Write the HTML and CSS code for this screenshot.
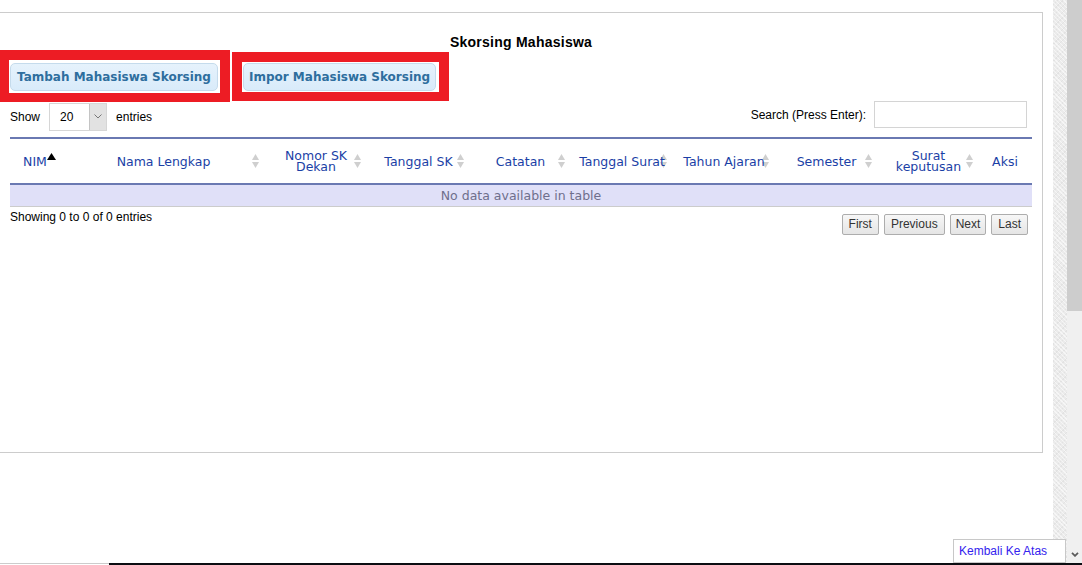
FILE: index.html
```html
<!DOCTYPE html>
<html lang="id">
<head>
<meta charset="utf-8">
<title>Skorsing Mahasiswa</title>
<link rel="stylesheet" href="styles.css">
</head>
<body>
<div class="screen">
  <div class="top">
    <main class="main">
      <section class="panel">
        <h1 class="title">Skorsing Mahasiswa</h1>
        <div class="btn-row">
          <div class="frame frame-1"><button class="ui-btn">Tambah Mahasiswa Skorsing</button></div>
          <div class="frame frame-2"><button class="ui-btn">Impor Mahasiswa Skorsing</button></div>
        </div>
        <div class="controls">
          <div class="length">
            <span>Show</span>
            <span class="select"><span class="select-val">20</span><span class="select-arrow"><svg width="8" height="5" viewBox="0 0 8 5"><polyline points="0.5,0.5 4,4 7.5,0.5" fill="none" stroke="#777" stroke-width="1"/></svg></span></span>
            <span>entries</span>
          </div>
          <div class="search">
            <span>Search (Press Enter):</span>
            <span class="search-input"></span>
          </div>
        </div>
        <table class="data">
          <colgroup>
            <col class="c-nim"><col class="c-nama"><col class="c-nomor"><col class="c-tglsk"><col class="c-catatan"><col class="c-tglsurat"><col class="c-tahun"><col class="c-semester"><col class="c-surat"><col class="c-aksi">
          </colgroup>
          <thead>
            <tr class="head-row">
              <th class="th-nim"><span class="sort-asc"><svg width="9" height="7" viewBox="0 0 9 7"><polygon points="0,7 4.5,0 9,7" fill="#000"/></svg></span><span class="lbl">NIM</span></th>
              <th><span class="sort"><svg width="7" height="14" viewBox="0 0 7 14"><polygon points="0,6 3.5,0 7,6" /><polygon points="0,8 7,8 3.5,14"/></svg></span><span class="lbl">Nama Lengkap</span></th>
              <th><span class="sort"><svg width="7" height="14" viewBox="0 0 7 14"><polygon points="0,6 3.5,0 7,6" /><polygon points="0,8 7,8 3.5,14"/></svg></span><span class="lbl">Nomor SK Dekan</span></th>
              <th><span class="sort"><svg width="7" height="14" viewBox="0 0 7 14"><polygon points="0,6 3.5,0 7,6" /><polygon points="0,8 7,8 3.5,14"/></svg></span><span class="lbl">Tanggal SK</span></th>
              <th><span class="sort"><svg width="7" height="14" viewBox="0 0 7 14"><polygon points="0,6 3.5,0 7,6" /><polygon points="0,8 7,8 3.5,14"/></svg></span><span class="lbl">Catatan</span></th>
              <th><span class="sort"><svg width="7" height="14" viewBox="0 0 7 14"><polygon points="0,6 3.5,0 7,6" /><polygon points="0,8 7,8 3.5,14"/></svg></span><span class="lbl">Tanggal Surat</span></th>
              <th><span class="sort"><svg width="7" height="14" viewBox="0 0 7 14"><polygon points="0,6 3.5,0 7,6" /><polygon points="0,8 7,8 3.5,14"/></svg></span><span class="lbl">Tahun Ajaran</span></th>
              <th><span class="sort"><svg width="7" height="14" viewBox="0 0 7 14"><polygon points="0,6 3.5,0 7,6" /><polygon points="0,8 7,8 3.5,14"/></svg></span><span class="lbl">Semester</span></th>
              <th><span class="sort"><svg width="7" height="14" viewBox="0 0 7 14"><polygon points="0,6 3.5,0 7,6" /><polygon points="0,8 7,8 3.5,14"/></svg></span><span class="lbl">Surat keputusan</span></th>
              <th class="th-aksi"><span class="lbl">Aksi</span></th>
            </tr>
          </thead>
          <tbody>
            <tr><td class="empty" colspan="10">No data available in table</td></tr>
          </tbody>
        </table>
        <div class="table-foot">
          <div class="info">Showing 0 to 0 of 0 entries</div>
          <div class="paginate">
            <span class="pg-btn">First</span>
            <span class="pg-btn">Previous</span>
            <span class="pg-btn pg-next">Next</span>
            <span class="pg-btn">Last</span>
          </div>
        </div>
      </section>
    </main>
    <div class="texture"></div>
    <div class="scrollbar">
      <div class="thumb"></div>
      <div class="track"><svg width="8" height="5" viewBox="0 0 8 5"><polyline points="1,0.8 4,3.8 7,0.8" fill="none" stroke="#5a5a5a" stroke-width="1.8"/></svg></div>
    </div>
  </div>
  <div class="bottom"><div class="bottom-left"></div><div class="bottom-right"></div></div>
  <a class="back-top" href="#">Kembali Ke Atas</a>
</div>
</body>
</html>
```

FILE: styles.css
```css
html, body {
  margin: 0;
  padding: 0;
}
body {
  width: 1082px;
  height: 565px;
  overflow: hidden;
  background: #fff;
  font-family: "Liberation Sans", Arial, sans-serif;
  font-size: 12px;
  color: #000;
}
.screen {
  position: relative;
  width: 1082px;
  height: 565px;
  display: flex;
  flex-direction: column;
}
.top {
  height: 563px;
  display: flex;
}
.main {
  width: 1053px;
  padding-top: 12px;
  box-sizing: border-box;
  background: #fff;
}
.panel {
  width: 1043px;
  height: 441px;
  box-sizing: border-box;
  border: 1px solid #cccccc;
  border-left: 0;
  padding: 21px 10px 0 10px;
}
.title {
  margin: 0;
  font-size: 14px;
  font-weight: 700;
  line-height: 16px;
  letter-spacing: 0.25px;
  text-align: center;
}
.btn-row {
  display: flex;
  align-items: flex-start;
  margin-left: -10px;
  height: 52px;
}
.frame {
  border-style: solid;
  border-color: #ed1c24;
  background: #fff;
}
.frame-1 {
  border-width: 10px 10px 9px 9px;
  padding: 3px 2px 2px 1px;
}
.frame-2 {
  margin-left: 2px;
  margin-top: 2px;
  border-width: 10px 10px 9px 10px;
  padding: 1px 3px 1px 1px;
}
.ui-btn {
  display: block;
  height: 28px;
  box-sizing: border-box;
  padding: 0 6px;
  border: 1px solid #c5dbec;
  border-radius: 5px;
  background: linear-gradient(#e6f2fc, #d9ebfa);
  color: #2e6e9e;
  font-family: "DejaVu Sans", Verdana, sans-serif;
  font-weight: 700;
  font-size: 12px;
  line-height: 26px;
  white-space: nowrap;
}
.frame-2 .ui-btn {
  padding: 0 5px;
}
.controls {
  display: flex;
  justify-content: space-between;
  align-items: flex-start;
  margin-top: -1px;
  height: 29px;
}
.length {
  display: flex;
  align-items: center;
  margin-top: 2px;
  height: 27px;
}
.select {
  display: flex;
  width: 58px;
  height: 28px;
  box-sizing: border-box;
  margin: 0 9px 0 9px;
  border: 1px solid #d6d6d6;
  background: #fff;
}
.select-val {
  flex: 1;
  padding-left: 10px;
  line-height: 26px;
}
.select-arrow {
  width: 16px;
  display: flex;
  align-items: center;
  justify-content: center;
  background: #e2e2e2;
  border-left: 1px solid #c4c4c4;
}
.search {
  display: flex;
  align-items: center;
  margin-right: 5px;
  height: 27px;
}
.search-input {
  width: 153px;
  height: 27px;
  box-sizing: border-box;
  margin-left: 8px;
  border: 1px solid #d4d4d4;
  background: #fff;
}
.data {
  margin-top: 7px;
  width: 1022px;
  table-layout: fixed;
  border-collapse: separate;
  border-spacing: 0;
  border-top: 2px solid #6a79b2;
}
.c-nim { width: 48px; }
.c-nama { width: 203px; }
.c-nomor { width: 102px; }
.c-tglsk { width: 103px; }
.c-catatan { width: 101px; }
.c-tglsurat { width: 102px; }
.c-tahun { width: 102px; }
.c-semester { width: 103px; }
.c-surat { width: 101px; }
.c-aksi { width: 57px; }
.head-row {
  height: 46px;
}
.data th {
  position: relative;
  padding: 0 0 0 8px;
  border-bottom: 2px solid #6a79b2;
  font-family: "DejaVu Sans", Verdana, sans-serif;
  font-weight: 400;
  font-size: 12.5px;
  line-height: 11px;
  color: #1b3fa6;
  text-align: center;
  vertical-align: middle;
}
.data th.th-nim {
  padding-left: 2px;
}
.data th.th-aksi {
  padding-left: 3px;
}
.lbl {
  position: relative;
  z-index: 1;
}
.sort {
  position: absolute;
  z-index: 0;
  right: 2px;
  top: 50%;
  margin-top: -7px;
  width: 7px;
  height: 14px;
  fill: #cfcfcf;
}
.sort svg, .sort-asc svg {
  display: block;
}
.sort-asc {
  position: absolute;
  right: 2px;
  top: 14px;
}
.empty {
  height: 21px;
  padding: 0;
  background: #e0e0f8;
  border-bottom: 1px solid #cccccc;
  text-align: center;
  font-family: "DejaVu Sans", Verdana, sans-serif;
  font-size: 12.5px;
  line-height: 21px;
  color: #6f6f8c;
}
.table-foot {
  display: flex;
  justify-content: space-between;
  align-items: flex-start;
}
.info {
  margin-top: 3px;
  line-height: 15px;
}
.paginate {
  display: flex;
  gap: 5px;
  margin-top: 7px;
  margin-right: 4px;
}
.pg-btn {
  height: 21px;
  box-sizing: border-box;
  padding: 0 6px;
  border: 1px solid #adadad;
  border-radius: 2px;
  background: linear-gradient(#f7f7f7, #e5e5e5);
  color: #333;
  line-height: 19px;
}
.pg-btn.pg-next {
  padding: 0 5px;
}
.texture {
  width: 14px;
  background-color: #ebebeb;
  background-image:
    repeating-linear-gradient(45deg, rgba(255,255,255,0.55) 0 1px, transparent 1px 3px),
    repeating-linear-gradient(-45deg, rgba(0,0,0,0.04) 0 1px, transparent 1px 4px);
}
.scrollbar {
  width: 15px;
  display: flex;
  flex-direction: column;
}
.thumb {
  height: 311px;
  background: #cdcdcd;
}
.track {
  flex: 1;
  background: #f0f0f0;
  display: flex;
  flex-direction: column;
  justify-content: flex-end;
  align-items: center;
  padding-bottom: 6px;
}
.bottom {
  height: 2px;
  display: flex;
}
.bottom-left {
  width: 109px;
  border-top: 1px solid #cccccc;
  box-sizing: border-box;
  background: #fff;
}
.bottom-right {
  flex: 1;
  background: #0c0d12;
}
.back-top {
  position: absolute;
  left: 953px;
  top: 539px;
  width: 113px;
  height: 24px;
  box-sizing: border-box;
  padding-left: 5px;
  border: 1px solid #c8c8c8;
  background: #fff;
  color: #3322ee;
  text-decoration: none;
  line-height: 22px;
}
```
